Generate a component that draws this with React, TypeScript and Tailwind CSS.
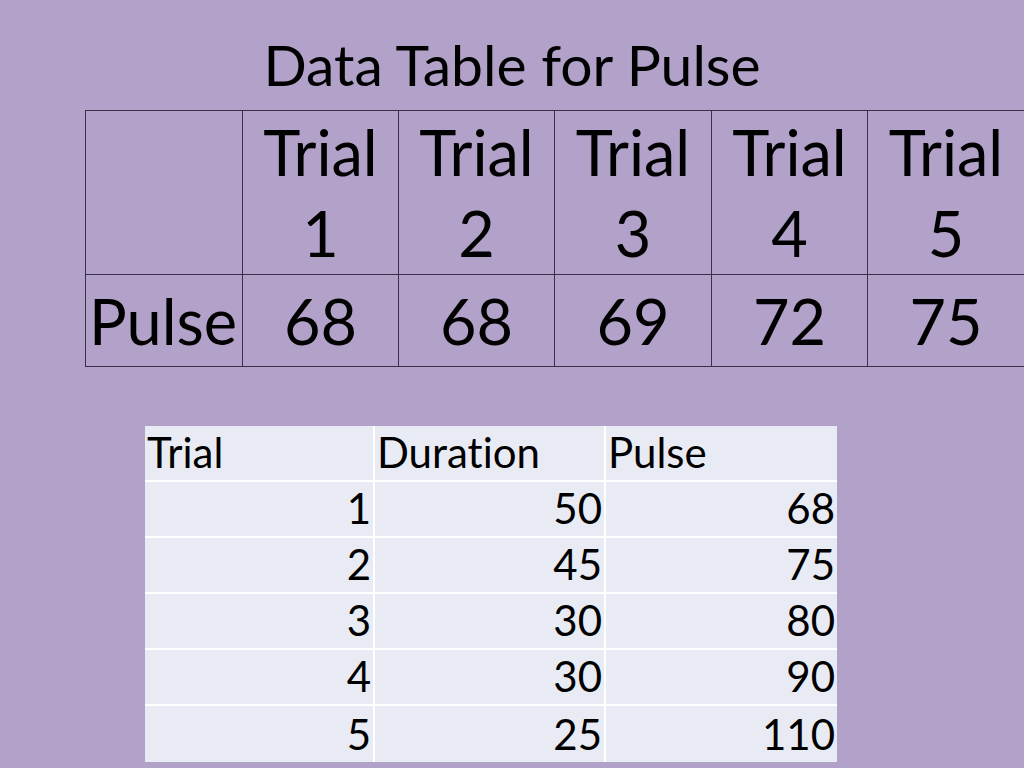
import React from "react";

const trials = ["1", "2", "3", "4", "5"];
const pulses = ["68", "68", "69", "72", "75"];
const rows = [
  ["1", "50", "68"],
  ["2", "45", "75"],
  ["3", "30", "80"],
  ["4", "30", "90"],
  ["5", "25", "110"],
];

export default function App() {
  return (
    <div
      className="w-[1024px] h-[768px] overflow-hidden bg-[#b2a1c8] text-black flex flex-col [font-variant-ligatures:none]"
      style={{ fontFamily: "Lato, 'Open Sans', sans-serif" }}
    >
      <h1 className="text-center text-[57px] leading-[64px] pt-[32px] h-[110px]">
        Data Table for Pulse
      </h1>
      <div className="pl-[85px]">
        <table className="border-collapse w-[1095px] table-fixed">
          <colgroup>
            <col className="w-[157px]" />
            <col className="w-[156px]" />
            <col className="w-[156px]" />
            <col className="w-[157px]" />
            <col className="w-[156px]" />
            <col className="w-[313px]" />
          </colgroup>
          <tbody>
            <tr className="h-[164px]">
              <td className="border border-[#3b3047] p-0" />
              {trials.map((t, i) => (
                <td
                  key={t}
                  className={`border border-[#3b3047] p-0 align-top text-center text-[63px] leading-[81px] ${i === 4 ? "pr-[156px]" : ""}`}
                >
                  Trial
                  <br />
                  {t}
                </td>
              ))}
            </tr>
            <tr className="h-[92px]">
              <td className="border border-[#3b3047] p-0 pl-[3px] text-[63px] leading-[82px] align-middle">
                Pulse
              </td>
              {pulses.map((p, i) => (
                <td
                  key={i}
                  className={`border border-[#3b3047] p-0 text-center text-[63px] leading-[82px] align-middle ${i === 4 ? "pr-[156px]" : ""}`}
                >
                  {p}
                </td>
              ))}
            </tr>
          </tbody>
        </table>
      </div>
      <div className="pl-[145px] pt-[59px]">
        <div className="grid grid-cols-[230px_231px_231px] w-[692px] bg-[#e9ebf4] text-[42px] leading-[56px]">
          {["Trial", "Duration", "Pulse"].map((h, i) => (
            <div
              key={h}
              className={`h-[56px] px-[2px] flex items-end border-b-2 border-white ${i < 2 ? "border-r-2" : ""}`}
            >
              {h}
            </div>
          ))}
          {rows.map((r, ri) =>
            r.map((c, ci) => (
              <div
                key={`${ri}-${ci}`}
                className={`h-[56px] px-[2px] flex items-end justify-end border-white ${ri < 4 ? "border-b-2" : ""} ${ci < 2 ? "border-r-2" : ""}`}
              >
                {c}
              </div>
            ))
          )}
        </div>
      </div>
    </div>
  );
}
